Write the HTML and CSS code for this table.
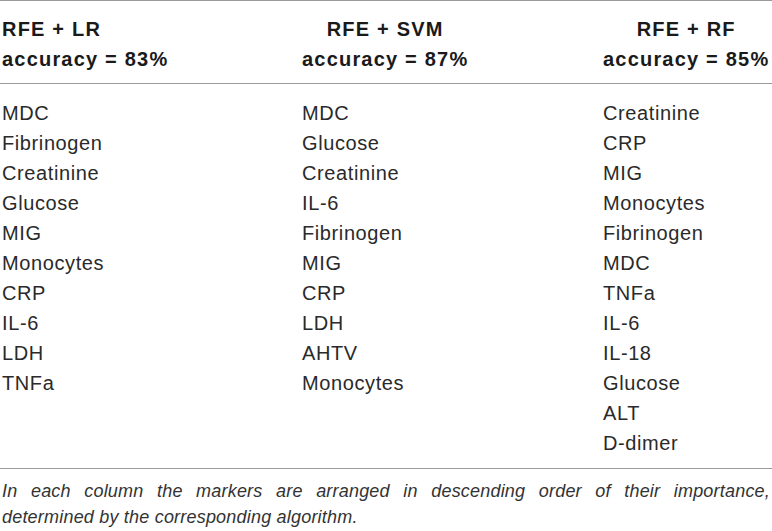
FILE: index.html
```html
<!DOCTYPE html>
<html>
<head>
<meta charset="utf-8">
<title>RFE markers</title>
<link rel="stylesheet" href="styles.css">
</head>
<body>
<div class="tbl">
	<div class="head">
		<div class="cell"><div class="hd">RFE + LR<br>accuracy = 83%</div></div>
		<div class="cell mid"><div class="hd">RFE + SVM<br>accuracy = 87%</div></div>
		<div class="cell mid"><div class="hd">RFE + RF<br>accuracy = 85%</div></div>
	</div>
	<div class="body">
		<ul class="cell">
			<li>MDC</li>
			<li>Fibrinogen</li>
			<li>Creatinine</li>
			<li>Glucose</li>
			<li>MIG</li>
			<li>Monocytes</li>
			<li>CRP</li>
			<li>IL-6</li>
			<li>LDH</li>
			<li>TNFa</li>
		</ul>
		<ul class="cell">
			<li>MDC</li>
			<li>Glucose</li>
			<li>Creatinine</li>
			<li>IL-6</li>
			<li>Fibrinogen</li>
			<li>MIG</li>
			<li>CRP</li>
			<li>LDH</li>
			<li>AHTV</li>
			<li>Monocytes</li>
		</ul>
		<ul class="cell">
			<li>Creatinine</li>
			<li>CRP</li>
			<li>MIG</li>
			<li>Monocytes</li>
			<li>Fibrinogen</li>
			<li>MDC</li>
			<li>TNFa</li>
			<li>IL-6</li>
			<li>IL-18</li>
			<li>Glucose</li>
			<li>ALT</li>
			<li>D-dimer</li>
		</ul>
	</div>
	<p class="note">
		<span class="first">In each column the markers are arranged in descending order of their importance,</span>
		<span>determined by the corresponding algorithm.</span>
	</p>
</div>
</body>
</html>
```

FILE: styles.css
```css
html, body {margin:0px;padding:0px;background:#fff;}
body {font-family:"Liberation Sans", Arial, sans-serif;color:#2a2a2a;}
.tbl {width:772px;border-top:1px solid #9a9a9a;}
.head, .body {display:grid;grid-template-columns:300px 301px 1fr;border-bottom:1px solid #9a9a9a;}
.head {padding:13px 0 9px 0;font-size:20px;line-height:30px;font-weight:bold;color:#1a1a1a;letter-spacing:1.2px;}
.body {padding:14px 0 10px 0;}
.cell {padding-left:2px;}
.mid .hd {display:inline-block;text-align:center;}
ul.cell {margin:0px;list-style-type:none;font-size:20px;line-height:30px;letter-spacing:0.6px;}
.note {margin:0px;padding:9px 2px 0 2px;font-size:18px;line-height:26px;font-style:italic;color:#333;letter-spacing:0.2px;}
.note span {display:block;}
.note .first {text-align:justify;text-align-last:justify;}
```
